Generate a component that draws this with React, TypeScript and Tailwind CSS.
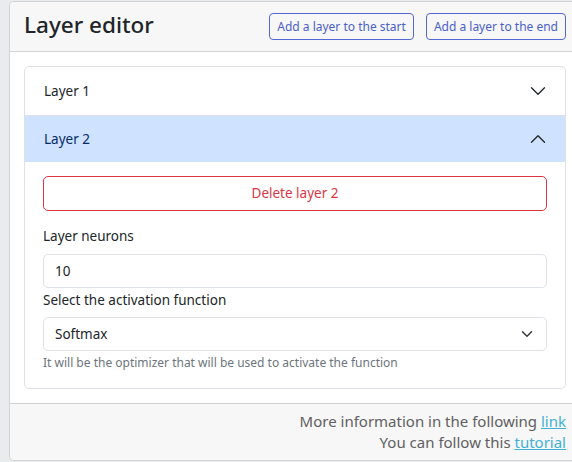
import React from "react";

const Chevron = ({ up = false }: { up?: boolean }) => (
  <svg width="16" height="16" viewBox="0 0 16 16" fill="none" className={up ? "rotate-180" : ""}>
    <path d="M1.5 4.75 8 11.25l6.5-6.5" stroke="#212529" strokeWidth="1.3" strokeLinecap="round" strokeLinejoin="round" />
  </svg>
);

const App = () => {
  return (
    <div
      className="h-[462px] w-[572px] overflow-hidden bg-[#e9ecef] pl-[9px] pt-px text-[#212529]"
      style={{ fontFamily: '"Noto Sans", "Open Sans", sans-serif' }}
    >
      <div className="flex h-[460px] w-[572px] flex-col rounded-[5px] border border-[#d3d3d3] bg-white">
        {/* header */}
        <div className="flex h-[50px] items-center justify-between rounded-t-[5px] border-b border-[#d3d3d3] bg-[#f7f7f7] pl-[14px] pr-[14px]">
          <h3 className="mb-[3px] text-[22.5px] font-medium leading-none">Layer editor</h3>
          <div className="flex gap-3">
            <button className="h-[27px] rounded-[4px] border border-[#5468d4] px-[7px] text-[12px] text-[#4b5fc9]">
              Add a layer to the start
            </button>
            <button className="h-[27px] rounded-[4px] border border-[#5468d4] px-[7px] text-[12px] text-[#4b5fc9]">
              Add a layer to the end
            </button>
          </div>
        </div>

        {/* body */}
        <div className="flex-1 px-[14px] pt-[14px]">
          <div className="rounded-[5px] border border-[#dee2e6]">
            <div className="flex h-[48px] items-center justify-between px-[19px] text-[13.5px]">
              <span>Layer 1</span>
              <Chevron />
            </div>
            <div className="flex h-[47px] items-center justify-between border-t border-[#dee2e6] bg-[#cfe2ff] px-[19px] text-[13.5px] text-[#052c65]">
              <span>Layer 2</span>
              <Chevron up />
            </div>
            <div className="px-[18px] pb-[16px] pt-[14px] text-[13.5px]">
              <button className="h-[35px] w-full rounded-[5px] border border-[#dc3545] text-[#dc3545]">
                Delete layer 2
              </button>
              <div className="mt-[15px] mb-[8px] leading-[20px]">Layer neurons</div>
              <div className="flex h-[34px] items-center rounded-[5px] border border-[#dee2e6] px-[11px]">10</div>
              <div className="mt-[2px] mb-[7px] leading-[20px]">Select the activation function</div>
              <div className="flex h-[34px] items-center justify-between rounded-[5px] border border-[#dee2e6] pl-[11px] pr-[13px]">
                <span>Softmax</span>
                <svg width="12" height="12" viewBox="0 0 16 16" fill="none">
                  <path d="M2 5l6 6 6-6" stroke="#343a40" strokeWidth="2" strokeLinecap="round" strokeLinejoin="round" />
                </svg>
              </div>
              <div className="mt-[3px] text-[12px] leading-[18px] text-[#6c757d]">
                It will be the optimizer that will be used to activate the function
              </div>
            </div>
          </div>
        </div>

        {/* footer */}
        <div className="flex h-[57px] flex-col items-end justify-center rounded-b-[5px] border-t border-[#d3d3d3] bg-[#f7f7f7] pr-[14px] text-[15px] leading-[21px] text-[#606060]">
          <div>
            More information in the following <a className="text-[#3fb1d6] underline">link</a>
          </div>
          <div>
            You can follow this <a className="text-[#3fb1d6] underline">tutorial</a>
          </div>
        </div>
      </div>
    </div>
  );
};

export default App;
